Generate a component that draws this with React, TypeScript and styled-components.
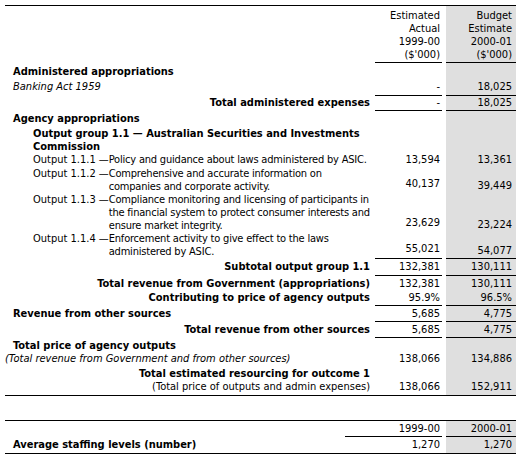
import React from "react";
import styled, { createGlobalStyle } from "styled-components";

const Global = createGlobalStyle`
  html, body { margin: 0; padding: 0; background: #ffffff; }
  body {
    font-family: "DejaVu Sans Condensed", "DejaVu Sans", sans-serif;
    font-stretch: condensed;
    font-size: 11px;
    line-height: 13px;
    color: #000000;
  }
`;

const GRAY = "#dfdfdf";

const Page = styled.div`
  padding: 5px 5px 0 5px;
  width: 511px;
  display: flex;
  flex-direction: column;
  gap: 24px;
`;

const Table = styled.div`
  border-top: 1px solid #000;
  border-bottom: 1px solid #000;
  display: flex;
  flex-direction: column;
`;

const Row = styled.div<{ $cols: string; $pt?: number; $pb?: number }>`
  display: grid;
  grid-template-columns: ${(p) => p.$cols};
  align-items: stretch;
  --pt: ${(p) => p.$pt ?? 1}px;
  --pb: ${(p) => p.$pb ?? 2}px;
`;

type LabelKind = "section" | "item" | "italic" | "group" | "output" | "total" | "note" | "noteItalic";

const Label = styled.div<{ $kind: LabelKind }>`
  padding-top: var(--pt);
  padding-bottom: var(--pb);
  padding-right: 5px;
  padding-left: ${(p) =>
    p.$kind === "group" || p.$kind === "output" ? 28 : p.$kind === "noteItalic" ? 0 : 8}px;
  font-weight: ${(p) => (p.$kind === "section" || p.$kind === "group" || p.$kind === "total" ? "bold" : "normal")};
  font-style: ${(p) => (p.$kind === "italic" || p.$kind === "noteItalic" ? "italic" : "normal")};
  text-align: ${(p) => (p.$kind === "total" || p.$kind === "note" ? "right" : "left")};
  display: ${(p) => (p.$kind === "output" ? "flex" : "block")};
  white-space: nowrap;
`;

const OutputNo = styled.span`
  flex: 0 0 74px;
`;

const OutputText = styled.span`
  flex: 1;
  letter-spacing: -0.2px;
`;

const Value = styled.div<{ $line?: boolean; $shade?: boolean; $lift?: boolean }>`
  display: flex;
  flex-direction: column;
  justify-content: flex-end;
  align-items: flex-end;
  text-align: right;
  padding-top: var(--pt);
  padding-bottom: ${(p) => (p.$lift ? "calc(var(--pb) + 2px)" : "var(--pb)")};
  padding-right: ${(p) => (p.$shade ? 4 : 2)}px;
  margin-left: ${(p) => (p.$shade ? 4 : 0)}px;
  background: ${(p) => (p.$shade ? GRAY : "transparent")};
  border-bottom: 1px solid ${(p) => (p.$line ? "#000" : "transparent")};
  white-space: nowrap;
`;

const COLS1 = "370px 67px 74px";
const COLS2 = "340px 97px 74px";

type Line = {
  kind: LabelKind;
  label: React.ReactNode;
  no?: string;
  v1?: string;
  v2?: string;
  line?: boolean;
  lift?: boolean;
  pt?: number;
  pb?: number;
};

const rows: Line[] = [
  { kind: "section", label: "Administered appropriations", pt: 2, pb: 1 },
  { kind: "italic", label: "Banking Act 1959", v1: "-", v2: "18,025", line: true, pt: 1, pb: 2 },
  { kind: "total", label: "Total administered expenses", v1: "-", v2: "18,025", line: true, pt: 0, pb: 1 },
  { kind: "section", label: "Agency appropriations", pt: 1, pb: 2 },
  {
    kind: "group",
    label: (
      <>
        Output group 1.1 — Australian Securities and Investments
        <br />
        Commission
      </>
    ),
    pt: 0,
    pb: 0,
  },
  {
    kind: "output",
    no: "Output 1.1.1 —",
    label: "Policy and guidance about laws administered by ASIC.",
    v1: "13,594",
    v2: "13,361",
    pt: 0,
    pb: 0,
  },
  {
    kind: "output",
    no: "Output 1.1.2 —",
    label: (
      <>
        Comprehensive and accurate information on
        <br />
        companies and corporate activity.
      </>
    ),
    v1: "40,137",
    v2: "39,449",
    lift: true,
    pt: 0,
    pb: 0,
  },
  {
    kind: "output",
    no: "Output 1.1.3 —",
    label: (
      <>
        Compliance monitoring and licensing of participants in
        <br />
        the financial system to protect consumer interests and
        <br />
        ensure market integrity.
      </>
    ),
    v1: "23,629",
    v2: "23,224",
    lift: true,
    pt: 0,
    pb: 0,
  },
  {
    kind: "output",
    no: "Output 1.1.4 —",
    label: (
      <>
        Enforcement activity to give effect to the laws
        <br />
        administered by ASIC.
      </>
    ),
    v1: "55,021",
    v2: "54,077",
    line: true,
    lift: true,
    pt: 0,
    pb: 1,
  },
  { kind: "total", label: "Subtotal output group 1.1", v1: "132,381", v2: "130,111", line: true, pt: 1, pb: 2 },
  { kind: "total", label: "Total revenue from Government (appropriations)", v1: "132,381", v2: "130,111", pt: 1, pb: 0 },
  { kind: "total", label: "Contributing to price of agency outputs", v1: "95.9%", v2: "96.5%", line: true, pt: 0, pb: 1 },
  { kind: "section", label: "Revenue from other sources", v1: "5,685", v2: "4,775", line: true, pt: 1, pb: 1 },
  { kind: "total", label: "Total revenue from other sources", v1: "5,685", v2: "4,775", line: true, pt: 1, pb: 1 },
  { kind: "section", label: "Total price of agency outputs", pt: 1, pb: 0 },
  { kind: "noteItalic", label: "(Total revenue from Government and from other sources)", v1: "138,066", v2: "134,886", pt: 0, pb: 1 },
  { kind: "total", label: "Total estimated resourcing for outcome 1", pt: 0, pb: 0 },
  { kind: "note", label: "(Total price of outputs and admin expenses)", v1: "138,066", v2: "152,911", pt: 0, pb: 1 },
];

export default function App() {
  return (
    <>
      <Global />
      <Page>
        <Table>
          <Row $cols={COLS1} $pt={3} $pb={1}>
            <Label $kind="item" />
            <Value $line>
              <span>Estimated</span>
              <span>Actual</span>
              <span>1999-00</span>
              <span>($'000)</span>
            </Value>
            <Value $line $shade>
              <span>Budget</span>
              <span>Estimate</span>
              <span>2000-01</span>
              <span>($'000)</span>
            </Value>
          </Row>
          {rows.map((r, i) => (
            <Row key={i} $cols={COLS1} $pt={r.pt} $pb={r.pb}>
              <Label $kind={r.kind}>
                {r.kind === "output" ? (
                  <>
                    <OutputNo>{r.no}</OutputNo>
                    <OutputText>{r.label}</OutputText>
                  </>
                ) : (
                  r.label
                )}
              </Label>
              <Value $line={r.line} $lift={r.lift}>
                {r.v1}
              </Value>
              <Value $line={r.line} $shade>
                {r.v2}
              </Value>
            </Row>
          ))}
        </Table>
        <Table>
          <Row $cols={COLS2} $pt={1} $pb={1}>
            <Label $kind="item" />
            <Value $line>1999-00</Value>
            <Value $line $shade>
              2000-01
            </Value>
          </Row>
          <Row $cols={COLS2} $pt={1} $pb={1}>
            <Label $kind="section">Average staffing levels (number)</Label>
            <Value>1,270</Value>
            <Value $shade>1,270</Value>
          </Row>
        </Table>
      </Page>
    </>
  );
}
